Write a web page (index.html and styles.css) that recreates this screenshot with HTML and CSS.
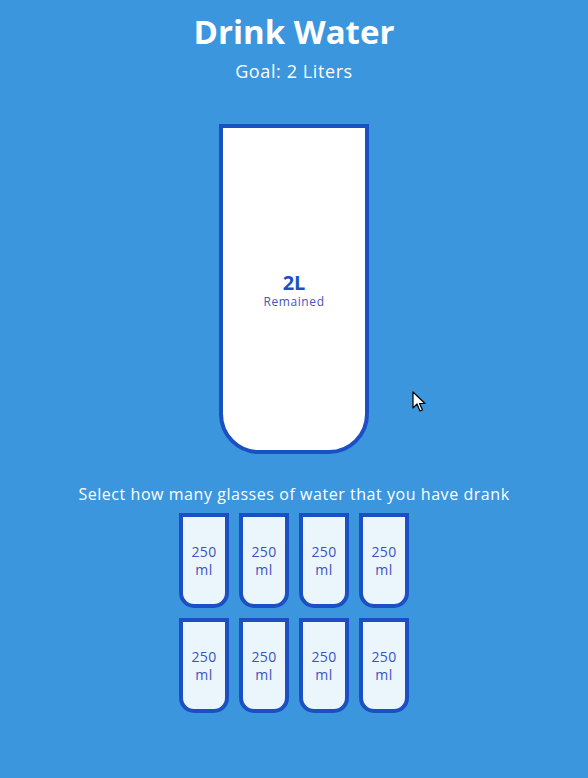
FILE: index.html
```
<!DOCTYPE html>
<html>
<head>
<title>Drink Water</title>
<link rel="stylesheet" href="styles.css">
</head>
<body>

<h1 class="title">Drink Water</h1>
<h3 class="goal">Goal: 2 Liters</h3>

<div class="cup">
	<div class="remained">
		<span class="liters">2L</span>
		<small class="label">Remained</small>
	</div>
</div>

<p class="text">Select how many glasses of water that you have drank</p>

<div class="cups">
	<div class="cup-small">250 ml</div>
	<div class="cup-small">250 ml</div>
	<div class="cup-small">250 ml</div>
	<div class="cup-small">250 ml</div>
	<div class="cup-small">250 ml</div>
	<div class="cup-small">250 ml</div>
	<div class="cup-small">250 ml</div>
	<div class="cup-small">250 ml</div>
</div>

<svg class="pointer" width="14" height="22" viewBox="0 0 14 22">
	<path d="M1 1 L1 17 L5 13 L8 20 L10.5 19 L7.5 12.5 L13 12.5 Z" fill="#fff" stroke="#000" stroke-width="1.2" stroke-linejoin="round"/>
</svg>

</body>
</html>
```

FILE: styles.css
```
* {
	box-sizing: border-box;
}
body {
	margin: 0;
	padding: 12px 0 40px;
	background: #3b96dd;
	color: #fff;
	font-family: "Open Sans", sans-serif;
	display: flex;
	flex-direction: column;
	align-items: center;
	position: relative;
}
.title {
	margin: 0;
	font-size: 33px;
	line-height: 40px;
	font-weight: 700;
}
.goal {
	margin: 6px 0 0;
	font-size: 18px;
	line-height: 26px;
	font-weight: 400;
	letter-spacing: 0.6px;
}
.cup {
	width: 150px;
	height: 330px;
	margin: 40px 0 30px;
	background: #fff;
	border: 4px solid #1a50c4;
	border-radius: 0 0 40px 40px;
	color: #1a50c4;
	display: flex;
	flex-direction: column;
	overflow: hidden;
}
.remained {
	flex: 1;
	display: flex;
	flex-direction: column;
	align-items: center;
	justify-content: center;
	text-align: center;
	padding-top: 2px;
}
.liters {
	font-size: 20px;
	font-weight: 700;
	line-height: 22px;
}
.label {
	margin-top: 1px;
	font-size: 12px;
	line-height: 14px;
	letter-spacing: 0.6px;
	color: #4a4fc0;
}
.text {
	margin: 0 0 4px;
	font-size: 16px;
	line-height: 20px;
	letter-spacing: 0.55px;
}
.cups {
	width: 280px;
	display: flex;
	flex-wrap: wrap;
	justify-content: center;
}
.cup-small {
	width: 50px;
	height: 95px;
	margin: 5px;
	background: rgba(255, 255, 255, 0.9);
	border: 4px solid #1a50c4;
	border-radius: 0 0 15px 15px;
	color: #3b52c0;
	font-size: 14px;
	line-height: 18px;
	letter-spacing: 0.4px;
	display: flex;
	align-items: center;
	justify-content: center;
	text-align: center;
}
.pointer {
	position: absolute;
	left: 412px;
	top: 391px;
}
```
